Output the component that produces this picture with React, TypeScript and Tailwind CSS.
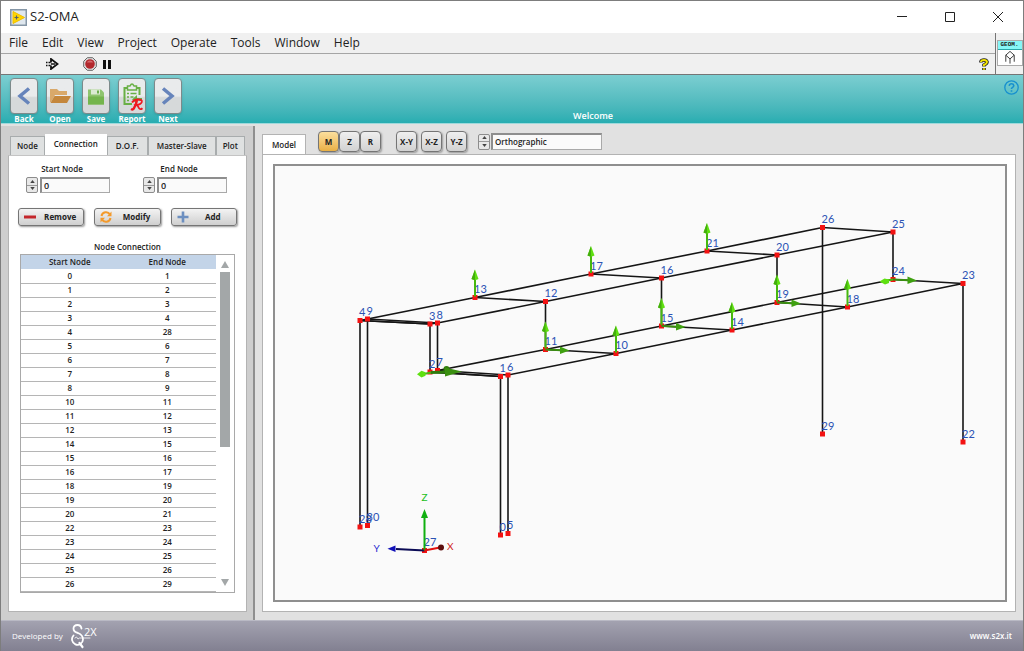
import { useState } from "react";
import type { ReactNode } from "react";

const MENU = ["File", "Edit", "View", "Project", "Operate", "Tools", "Window", "Help"];

const TABS = ["Node", "Connection", "D.O.F.", "Master-Slave", "Plot"];

const CONNECTIONS = [
  [0, 1], [1, 2], [2, 3], [3, 4], [4, 28], [5, 6], [6, 7], [7, 8],
  [8, 9], [10, 11], [11, 12], [12, 13], [14, 15], [15, 16], [16, 17],
  [18, 19], [19, 20], [20, 21], [22, 23], [23, 24], [24, 25], [25, 26], [26, 29],
];

const PROJECTIONS = ["Orthographic", "Perspective"];

type Point = [number, number];

const NODES: Record<number, Point> = {
  0: [500.5, 535], 1: [500.5, 376.5], 2: [430, 372], 3: [430, 324], 4: [360, 320.5],
  5: [508, 533.5], 6: [508, 375], 7: [437.5, 370.5], 8: [437.5, 323], 9: [367.5, 319],
  10: [616, 353.5], 11: [545.5, 349.5], 12: [545.5, 301.5], 13: [475, 297.5],
  14: [732, 330], 15: [661.5, 326], 16: [661.5, 278], 17: [591, 274],
  18: [847.5, 307], 19: [777, 302.5], 20: [777, 255], 21: [707, 251],
  22: [963, 442], 23: [963, 283.5], 24: [893, 279.5], 25: [893, 232], 26: [822.5, 227.5],
  27: [424.5, 550.5], 28: [360, 527], 29: [822.5, 434], 30: [367.5, 525.5],
};

const MEMBERS = [
  ...CONNECTIONS,
  [9, 30], [4, 9], [3, 8], [9, 13], [13, 17], [17, 21], [21, 26],
  [8, 12], [12, 16], [16, 20], [20, 25],
  [7, 11], [11, 15], [15, 19], [19, 24],
  [6, 10], [10, 14], [14, 18], [18, 23],
];

const UP_SENSORS = [10, 11, 13, 14, 15, 17, 18, 19, 21];
const SIDE_SENSORS = [11, 15, 19, 24];

function Spinner({ label, onUp, onDown }: { label: string; onUp: () => void; onDown: () => void }) {
  return (
    <div className="flex h-4 w-3 shrink-0 flex-col overflow-hidden rounded-xs border border-[#8c8c8c] bg-[#e8e8e8]">
      <button
        aria-label={`Increase ${label}`}
        onClick={onUp}
        className="flex flex-1 items-center justify-center border-b border-[#9a9a9a]"
      >
        <svg viewBox="0 0 6 4" className="h-[3px] w-[5px]">
          <path d="M3 0 6 4H0z" fill="#444" />
        </svg>
      </button>
      <button
        aria-label={`Decrease ${label}`}
        onClick={onDown}
        className="flex flex-1 items-center justify-center"
      >
        <svg viewBox="0 0 6 4" className="h-[3px] w-[5px]">
          <path d="M3 4 0 0h6z" fill="#444" />
        </svg>
      </button>
    </div>
  );
}

function NodeField({ id, label }: { id: string; label: string }) {
  const [value, setValue] = useState(0);

  return (
    <div className="w-[84px]">
      <label htmlFor={id} className="block h-3 pr-3 text-center leading-3">
        {label}
      </label>
      <div className="mt-0.5 flex gap-0.5">
        <Spinner
          label={label}
          onUp={() => setValue(value + 1)}
          onDown={() => setValue(Math.max(0, value - 1))}
        />
        <input
          id={id}
          value={value}
          onChange={(e) => setValue(Number(e.target.value) || 0)}
          className="h-4 w-[70px] border border-t-2 border-l-2 border-[#a9a9a9] border-t-[#8e8e8e] border-l-[#8e8e8e] bg-[#fafafa] px-0.5 text-[9px]"
        />
      </div>
    </div>
  );
}

function BigButton({ label, children }: { label: string; children: ReactNode }) {
  return (
    <button className="flex w-7 flex-col items-center">
      <span className="flex h-9 w-7 items-center justify-center rounded-sm border border-[#7d8a8b] bg-linear-to-b from-[#e9ebec] from-50% to-[#d6d9da] to-55% shadow-sm">
        {children}
      </span>
      <span className="h-[9px] text-[8px] leading-[9px] font-bold text-white">{label}</span>
    </button>
  );
}

function ActionButton({ label, children }: { label: string; children: ReactNode }) {
  return (
    <button className="flex h-[18px] flex-1 items-center rounded-[3px] border border-[#757575] bg-linear-to-b from-[#f3f3f3] to-[#cfcfcf] pr-1 pl-1 font-bold shadow-[1px_1px_2px_#999]">
      <svg viewBox="0 0 14 14" className="size-[14px]" fill="none">
        {children}
      </svg>
      <span className="flex-1 pl-1 text-center">{label}</span>
    </button>
  );
}

function ViewButton({ label, active = false }: { label: string; active?: boolean }) {
  return (
    <button
      className={`h-[21px] w-[21px] rounded-sm border border-[#757575] font-bold shadow-[1px_1px_2px_#999] ${
        active
          ? "bg-linear-to-b from-[#fbdf9c] to-[#e9b044]"
          : "bg-linear-to-b from-[#efefef] to-[#d2d2d2]"
      }`}
    >
      {label}
    </button>
  );
}

function TitleBar() {
  return (
    <header className="flex h-8 items-center bg-white pr-px pl-[9px]">
      <svg viewBox="0 0 17 17" className="size-[17px]">
        <rect x="0.75" y="0.75" width="15.5" height="15.5" fill="#dfe7ee" stroke="#8596a6" strokeWidth="1.5" />
        <path d="M3 2.5 14.5 8.5 3 14.5z" fill="#ffd500" stroke="#f0be00" strokeWidth="1" />
        <path d="M4.500 8.500h4M6.500 6.500v4" stroke="#55606a" strokeWidth="1.200" />
      </svg>
      <h1 className="ml-[3px] flex-1 text-[13px]">S2-OMA</h1>
      <button aria-label="Minimize" className="flex h-full w-12 items-center justify-center">
        <svg viewBox="0 0 10 10" className="size-[10px]">
          <path d="M0 4.500h10" stroke="#222" />
        </svg>
      </button>
      <button aria-label="Maximize" className="flex h-full w-12 items-center justify-center">
        <svg viewBox="0 0 10 10" className="size-[10px]">
          <path d="M.5.5h9v9h-9z" fill="none" stroke="#222" />
        </svg>
      </button>
      <button aria-label="Close" className="flex h-full w-12 items-center justify-center">
        <svg viewBox="0 0 10 10" className="size-[10px]">
          <path d="M0 0l10 10M10 0 0 10" stroke="#222" />
        </svg>
      </button>
    </header>
  );
}

function MenuArea() {
  return (
    <div className="flex border-b border-[#757575] bg-[#f0f0f0]">
      <div className="flex-1">
        <nav className="flex h-[21px] items-center gap-3.5 border-b border-[#a5a5a5] pl-2 text-[12px]">
          {MENU.map((item) => (
            <button key={item}>{item}</button>
          ))}
        </nav>
        <div className="flex h-5 items-center pr-1.5 pl-[45px]">
          <button aria-label="Run">
            <svg viewBox="0 0 13 12" className="h-3 w-[13px]">
              <path d="M0 4.500h1.500M0 7.500h1.500M2.500 4.500h2M2.500 7.500h2" stroke="#111" strokeWidth="1.600" />
              <path d="M5 4.500V1l6.500 5L5 11V7.500" fill="#fff" stroke="#111" strokeWidth="1.800" />
              <path d="M5 6h4" stroke="#111" strokeWidth="1.500" />
            </svg>
          </button>
          <button aria-label="Abort" className="ml-6">
            <svg viewBox="0 0 14 14" className="size-[14px]">
              <path d="M4.300.7h5.400l3.600 3.600v5.400l-3.600 3.600H4.300L.7 9.700V4.300z" fill="#ddd" stroke="#666" />
              <circle cx="7" cy="7" r="4.800" fill="#b3282d" />
              <path d="M3.800 5.500a3.500 3.500 0 0 1 6.400 0z" fill="#d4686b" />
            </svg>
          </button>
          <button aria-label="Pause" className="ml-1.5 flex-1">
            <svg viewBox="0 0 8 9" className="h-[9px] w-2">
              <path d="M0 0h3v9H0zM5 0h3v9H5z" fill="#111" />
            </svg>
          </button>
          <button aria-label="Context help">
            <svg viewBox="0 0 10 13" className="h-[13px] w-[10px]" fill="none">
              <path d="M2 4.500V3.500Q2.500 2 5 2t3 2q0 1.500-3 3v1.500M5 10v2" stroke="#222" strokeWidth="3.600" />
              <path d="M2 4V3.500Q2.500 2 5 2t3 2q0 1.500-3 3v1.300M5 10.200v1.500" stroke="#f4e400" strokeWidth="2" />
            </svg>
          </button>
        </div>
      </div>
      <div className="flex w-7 flex-col items-center border-l border-[#757575] pt-[7px]">
        <div className="h-[26px] w-[26px] border border-[#aaa] bg-white">
          <div className="h-[9px] border-b border-[#2aa5a8] bg-[#86f7f7] text-center font-mono text-[6px] leading-[8px] font-bold">
            GEOM.
          </div>
          <svg viewBox="0 0 24 16" className="h-[15px] w-6" fill="none" stroke="#333">
            <path d="M7.500 12.500V5.500L12 1.500l4.500 4V12.500M7.500 5.500l4.500 4 4.500-4M12 9.500v5" />
          </svg>
        </div>
      </div>
    </div>
  );
}

function Ribbon() {
  return (
    <div className="relative flex h-[49px] justify-between border-b border-[#9fd9db] bg-linear-to-b from-[#7bced1] to-[#27adb1] pt-[3px] pr-1 pl-[9px]">
      <div className="flex gap-2">
        <BigButton label="Back">
          <svg viewBox="0 0 20 24" className="h-6 w-5" fill="none">
            <path d="M15 4.500 6 12l9 7.500" stroke="#6684bb" strokeWidth="3.500" />
          </svg>
        </BigButton>
        <BigButton label="Open">
          <svg viewBox="0 0 24 20" className="h-5 w-6">
            <path d="M2 3h7l2 2h8v4H7l-4 7H2z" fill="#d9a96a" />
            <path d="M6.500 10H23l-4 7H2.500z" fill="#c4873c" />
          </svg>
        </BigButton>
        <BigButton label="Save">
          <svg viewBox="0 0 20 20" className="size-5">
            <path d="M2 3.500h13l3 3V18.500H2z" fill="#8fc46f" />
            <path d="M5 3.500h9v5H5z" fill="#dcebd3" />
            <path d="M11 4.500h2v3h-2z" fill="#6fae4e" />
            <path d="M2 10.500h16v8H2z" fill="#74b54d" />
          </svg>
        </BigButton>
        <BigButton label="Report">
          <svg viewBox="0 0 24 32" className="h-8 w-6" fill="none">
            <path d="M7 8H4.500v16H12M17 8h2.500v7" stroke="#69b045" strokeWidth="2" />
            <path d="M7.500 6h2.500q2-4 4 0h2.500v4h-9z" fill="#e9ebec" stroke="#69b045" strokeWidth="1.500" />
            <path d="M7 13.500h2M10.500 13.500h6M7 17h2M10.500 17h3M7 20.500h2" stroke="#69b045" strokeWidth="1.500" />
            <path d="M22 18h-5v-3l-5 4.500 5 4v-3h5z" fill="#69b045" />
            <path
              d="M12 22.500q2-3 6-3 4.500 0 3.800 2.500-.8 2.500-5.300 3 1.500.7 2.500 3.200 1 2 3.500 0"
              stroke="#f01820"
              strokeWidth="1.800"
            />
            <path d="M17 20q-1 5.500-3.200 8.500-1 1.500-2.800.5" stroke="#f01820" strokeWidth="2.400" />
          </svg>
        </BigButton>
        <BigButton label="Next">
          <svg viewBox="0 0 20 24" className="h-6 w-5" fill="none">
            <path d="M5 4.500 14 12l-9 7.500" stroke="#6684bb" strokeWidth="3.500" />
          </svg>
        </BigButton>
      </div>
      <div className="absolute bottom-px left-[572px] text-[9px] leading-3 font-semibold text-white">
        Welcome
      </div>
      <button aria-label="Help" className="self-start pt-0.5">
        <svg viewBox="0 0 15 15" className="size-[15px]" fill="none" stroke="#1690cf">
          <circle cx="7.500" cy="7.500" r="6.700" strokeWidth="1.300" />
          <path d="M5.200 5.800q.3-2 2.300-2t2.300 1.800q0 1.200-1.500 2-.8.400-.8 1.400M7.500 10.200v1.600" strokeWidth="1.600" />
        </svg>
      </button>
    </div>
  );
}

function ConnectionTable() {
  return (
    <div className="flex border border-[#a9a9a9] bg-white">
      <table className="flex-1 table-fixed border-collapse text-center" aria-label="Node Connection">
        <thead>
          <tr className="h-[14px] bg-[#c3d4e8]">
            <th className="w-1/2 p-0 leading-3 font-semibold">Start Node</th>
            <th className="w-1/2 p-0 leading-3 font-semibold">End Node</th>
          </tr>
        </thead>
        <tbody>
          {CONNECTIONS.map(([start, end]) => (
            <tr key={`${start}-${end}`} className="h-[14px] border-b border-[#b5b5b5]">
              <td className="p-0 leading-3">{start}</td>
              <td className="p-0 leading-3">{end}</td>
            </tr>
          ))}
        </tbody>
      </table>
      <div className="flex w-[18px] flex-col items-center py-1.5">
        <svg viewBox="0 0 8 7" className="h-[7px] w-2">
          <path d="M4 0 8 7H0z" fill="#a3a7a8" />
        </svg>
        <div className="mt-1 w-full flex-1 px-1">
          <div className="h-[57%] bg-[#a3a7a8]" />
        </div>
        <svg viewBox="0 0 8 7" className="h-[7px] w-2">
          <path d="M4 7 0 0h8z" fill="#a3a7a8" />
        </svg>
      </div>
    </div>
  );
}

function ConnectionPanel() {
  const [tab, setTab] = useState("Connection");

  return (
    <aside className="flex w-[254px] shrink-0 flex-col border-r-2 border-[#8f8f8f] bg-[#cecece] pt-2 pr-1.5 pb-2 pl-[7px]">
      <div role="tablist" className="flex h-[21px] items-end pl-0.5">
        {TABS.map((name) => (
          <button
            key={name}
            role="tab"
            aria-selected={name === tab}
            onClick={() => setTab(name)}
            className={`border border-b-0 px-2 font-semibold whitespace-nowrap first:px-1.5 last:px-1.5 ${
              name === tab
                ? "h-[21px] border-white bg-white pb-0.5"
                : "h-[19px] border-[#a8acad] bg-[#dfe1e1]"
            }`}
          >
            {name}
          </button>
        ))}
      </div>
      <div className="flex-1 border border-[#b3b3b3] border-t-[#c4c4c4] bg-white pt-[7px] pb-4 font-semibold">
        <div className="flex gap-[33px] pl-[17px]">
          <NodeField id="start-node" label="Start Node" />
          <NodeField id="end-node" label="End Node" />
        </div>
        <div className="mt-[15px] flex gap-2.5 px-[9px]">
          <ActionButton label="Remove">
            <path d="M1 7h12" stroke="#c4272c" strokeWidth="3" />
          </ActionButton>
          <ActionButton label="Modify">
            <path d="M2.500 6a4.600 4.600 0 0 1 8.500-1.500M11.500 8A4.600 4.600 0 0 1 3 9.500" stroke="#f39a2c" strokeWidth="2" />
            <path d="M12.500 1.500v4.800H8zM1.500 12.500V7.700H6z" fill="#f39a2c" />
          </ActionButton>
          <ActionButton label="Add">
            <path d="M7 1.500v11M1.500 7h11" stroke="#6c8fc0" strokeWidth="2.600" />
          </ActionButton>
        </div>
        <div className="mt-[15px] mb-px h-3 text-center leading-3">Node Connection</div>
        <div className="px-[11px]">
          <ConnectionTable />
        </div>
      </div>
    </aside>
  );
}

function Structure() {
  return (
    <svg
      viewBox="275 166 730 434"
      className="w-full"
      fill="none"
      fontFamily="Lato, sans-serif"
      fontSize="11"
      role="img"
      aria-label="Structure model"
    >
      {MEMBERS.map(([a, b]) => (
        <line
          key={`${a}-${b}`}
          x1={NODES[a][0]}
          y1={NODES[a][1]}
          x2={NODES[b][0]}
          y2={NODES[b][1]}
          stroke="#151515"
          strokeWidth="1.600"
        />
      ))}
      {/* second member between the twin columns */}
      <path d="M360 320.500 430 324M430 372l70.500 4.500" stroke="#151515" strokeWidth="1.600" />
      {Object.entries(NODES).map(([id, [x, y]]) => (
        <rect key={id} x={x - 2.5} y={y - 2.5} width="5" height="5" fill="#f31212" />
      ))}
      {Object.entries(NODES).map(([id, [x, y]]) => (
        <text key={id} x={x - 1} y={y - 4.5} fill="#2b52b4">
          {id}
        </text>
      ))}
      {SIDE_SENSORS.map((id) => (
        <g key={id} transform={`translate(${NODES[id][0]} ${NODES[id][1]})`}>
          <path d="M0 0l16 .8" stroke="#3a8f10" strokeWidth="2" />
          <path d="M14.500-3 24 1l-9.500 3.500z" fill="#3fa010" />
        </g>
      ))}
      {UP_SENSORS.map((id) => (
        <g key={id} transform={`translate(${NODES[id][0]} ${NODES[id][1]})`}>
          <path d="M0-1v-19" stroke="#46b80e" strokeWidth="2" />
          <path d="M0-28-3.500-18.500Q0-16.500 3.500-18.500z" fill="#5ee010" />
          <path d="M0-28-3.500-18.500Q-1.500-17.500 0-17.500z" fill="#43ad0d" />
        </g>
      ))}

      {/* sensors at both ends of the lower chord */}
      <path d="M893 279.500l-6 1" stroke="#46b80e" strokeWidth="2" />
      <path d="M879.500 281.500l5-3 4.500 1v3.500l-4 1.500z" fill="#5ee010" />
      <path d="M425 373.800l6-1.300" stroke="#46b80e" strokeWidth="2" />
      <path d="M417 374.200l4.500-3.500 4 1.500v3.500l-4 1.700z" fill="#5ee010" />
      <path d="M431 372.500l24-.8" stroke="#2f7d0d" strokeWidth="3" />
      <circle cx="446.500" cy="369" r="3" fill="#2f7d0d" />
      <path d="M445 367.500 462 371.500 445 376.500z" fill="#3a8f10" />

      {/* axes */}
      <path d="M424.500 550.500 396 549" stroke="#0b0b55" strokeWidth="2" />
      <path d="M387.500 548.800l8-3.300v6.500z" fill="#1010b8" />
      <path d="M424.500 550.500V517" stroke="#10b010" strokeWidth="2" />
      <path d="M424.500 509l-3.500 9h7z" fill="#10b010" />
      <path d="M424.500 550.500 440 547.500" stroke="#e01010" strokeWidth="2" />
      <circle cx="441" cy="547.500" r="3" fill="#5c0d0d" />
      <text x="373.500" y="551.500" fontSize="10" fill="#2a2ad0">Y</text>
      <text x="421.500" y="500.500" fontSize="10" fill="#22c022">Z</text>
      <text x="447" y="549.500" fontSize="10" fill="#d02020">X</text>
    </svg>
  );
}

function ModelPanel() {
  const [projection, setProjection] = useState(0);
  const step = () => setProjection((projection + 1) % PROJECTIONS.length);

  return (
    <main className="flex flex-1 flex-col bg-[#e1e1e1] pr-[7px] pb-2 pl-[7px]">
      <div className="flex h-7 items-end">
        <div className="flex h-5 w-11 items-center justify-center border border-b-0 border-[#b3b3b3] bg-white font-semibold">
          Model
        </div>
        <div className="flex flex-1 items-center self-start pt-[5px] pl-3">
          <div className="flex">
            <ViewButton label="M" active />
            <ViewButton label="Z" />
            <ViewButton label="R" />
          </div>
          <div className="ml-[15px] flex gap-1">
            <ViewButton label="X-Y" />
            <ViewButton label="X-Z" />
            <ViewButton label="Y-Z" />
          </div>
          <div className="ml-[11px] flex items-center gap-px">
            <Spinner label="projection" onUp={step} onDown={step} />
            <select
              aria-label="Projection"
              value={projection}
              onChange={(e) => setProjection(Number(e.target.value))}
              className="h-[17px] w-[111px] appearance-none border border-t-2 border-l-2 border-[#a9a9a9] border-t-[#8e8e8e] border-l-[#8e8e8e] bg-[#fafafa] px-0.5 font-semibold"
            >
              {PROJECTIONS.map((name, index) => (
                <option key={name} value={index}>
                  {name}
                </option>
              ))}
            </select>
          </div>
        </div>
      </div>
      <div className="flex-1 border border-[#b3b3b3] bg-white pt-[9px] pr-2 pb-[9px] pl-2.5">
        <div className="flex border-2 border-[#8f8f8f] bg-[#fafafa]">
          <Structure />
        </div>
      </div>
    </main>
  );
}

function Footer() {
  return (
    <footer className="flex h-[31px] items-center border-t border-[#b9b9c4] bg-linear-to-b from-[#a3a2b0] to-[#828091] pr-[11px] pl-[11px] text-[8px] text-white">
      <span className="font-medium">Developed by</span>
      <svg viewBox="0 0 28 26" className="ml-2 h-[26px] w-7" fill="none" stroke="#fff" strokeLinecap="round">
        <path d="M10.500 5.500Q10 2 6.500 2 2.500 2 2.500 5.500T7 10q5 2 5 6.500a5.500 5.500 0 1 1-9.500-4" strokeWidth="1.800" />
        <path d="M8.500 20l3 4" strokeWidth="2.200" />
        <path d="M4 15l1.500-1 1.500 2 1.500-1H19" strokeWidth="0.800" />
        <text x="13" y="13" fontSize="11" fill="#fff" stroke="none">2X</text>
      </svg>
      <a href="#site" className="ml-auto font-semibold">www.s2x.it</a>
    </footer>
  );
}

export default function App() {
  return (
    <div className="flex min-h-screen flex-col border-x border-t border-[#7d7d7d] bg-[#e1e1e1] font-['Open_Sans',sans-serif] text-[#222]">
      <TitleBar />
      <MenuArea />
      <Ribbon />
      <div className="mt-0.5 flex flex-1 text-[8px]">
        <ConnectionPanel />
        <ModelPanel />
      </div>
      <Footer />
    </div>
  );
}
